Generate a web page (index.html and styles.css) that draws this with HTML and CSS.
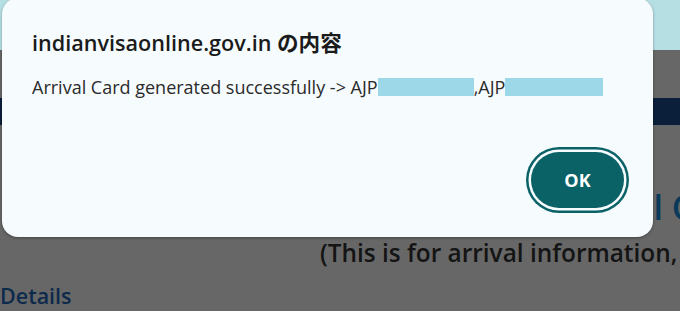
FILE: index.html
```html
<!DOCTYPE html>
<html lang="ja">
<head>
<meta charset="utf-8">
<title>indianvisaonline.gov.in</title>
<link rel="stylesheet" href="styles.css">
</head>
<body>
<div class="page">
  <div class="band-top"></div>
  <div class="band-gray"></div>
  <div class="band-navy"></div>
  <div class="content">
    <h1 class="heading">Indian e-Arrival Card</h1>
    <p class="subtitle">(This is for arrival information, not a visa)</p>
    <h2 class="details">Details</h2>
  </div>

  <div class="dialog" role="alertdialog">
    <div class="dialog-title">indianvisaonline.gov.in の内容</div>
    <div class="dialog-msg">Arrival Card generated successfully -&gt; AJP<span class="redact r1"></span>,AJP<span class="redact r2"></span></div>
    <div class="dialog-actions">
      <button class="ok">OK</button>
    </div>
  </div>
</div>
</body>
</html>
```

FILE: styles.css
```css
html, body {
  margin: 0;
  padding: 0;
}
body {
  width: 680px;
  height: 311px;
  overflow: hidden;
  background: #676767;
  font-family: "Open Sans", "Noto Sans CJK JP", sans-serif;
}
.page {
  position: relative;
  width: 680px;
  height: 311px;
  overflow: hidden;
  background: #676767;
}
.band-top {
  height: 50px;
  background: #b6dfe3;
}
.band-gray {
  height: 48px;
  background: #676767;
}
.band-navy {
  height: 27px;
  background: #0b1f3b;
}
.content {
  padding-top: 62px;
}
.heading {
  margin: 0;
  padding-left: 411px;
  font-size: 34px;
  line-height: 40px;
  font-weight: 600;
  color: #0a3a5a;
  white-space: nowrap;
}
.subtitle {
  margin: 11px 0 0 0;
  padding-left: 320px;
  font-size: 24.4px;
  line-height: 30px;
  font-weight: 600;
  color: #141414;
  white-space: nowrap;
}
.details {
  margin: 15px 0 0 0;
  font-size: 21.5px;
  line-height: 26px;
  font-weight: 600;
  color: #0d2a4c;
}
.dialog {
  position: absolute;
  left: 2px;
  top: -2px;
  width: 651px;
  height: 239px;
  box-sizing: border-box;
  background: #f6fbfe;
  border-radius: 16px;
  box-shadow: 0 1px 3px rgba(0, 0, 0, 0.35);
  padding: 31px 29px 0 30px;
  color: #202020;
}
.dialog-title {
  font-size: 21.6px;
  line-height: 28px;
  font-weight: 600;
  color: #1b1b1b;
  white-space: nowrap;
}
.dialog-msg {
  margin-top: 19px;
  font-size: 18px;
  line-height: 22px;
  color: #2b2b2b;
  white-space: nowrap;
}
.redact {
  display: inline-block;
  vertical-align: -2px;
  height: 18px;
  background: #9dd8e8;
}
.r1 { width: 96px; }
.r2 { width: 98px; }
.dialog-actions {
  display: flex;
  justify-content: flex-end;
  margin-top: 54px;
}
.ok {
  width: 93px;
  height: 56px;
  border: none;
  border-radius: 28px;
  background: #0a6166;
  color: #ffffff;
  font-family: inherit;
  font-size: 18px;
  font-weight: 700;
  box-shadow: 0 0 0 2.5px #f6fbfe, 0 0 0 5px #0a6166;
}
```
